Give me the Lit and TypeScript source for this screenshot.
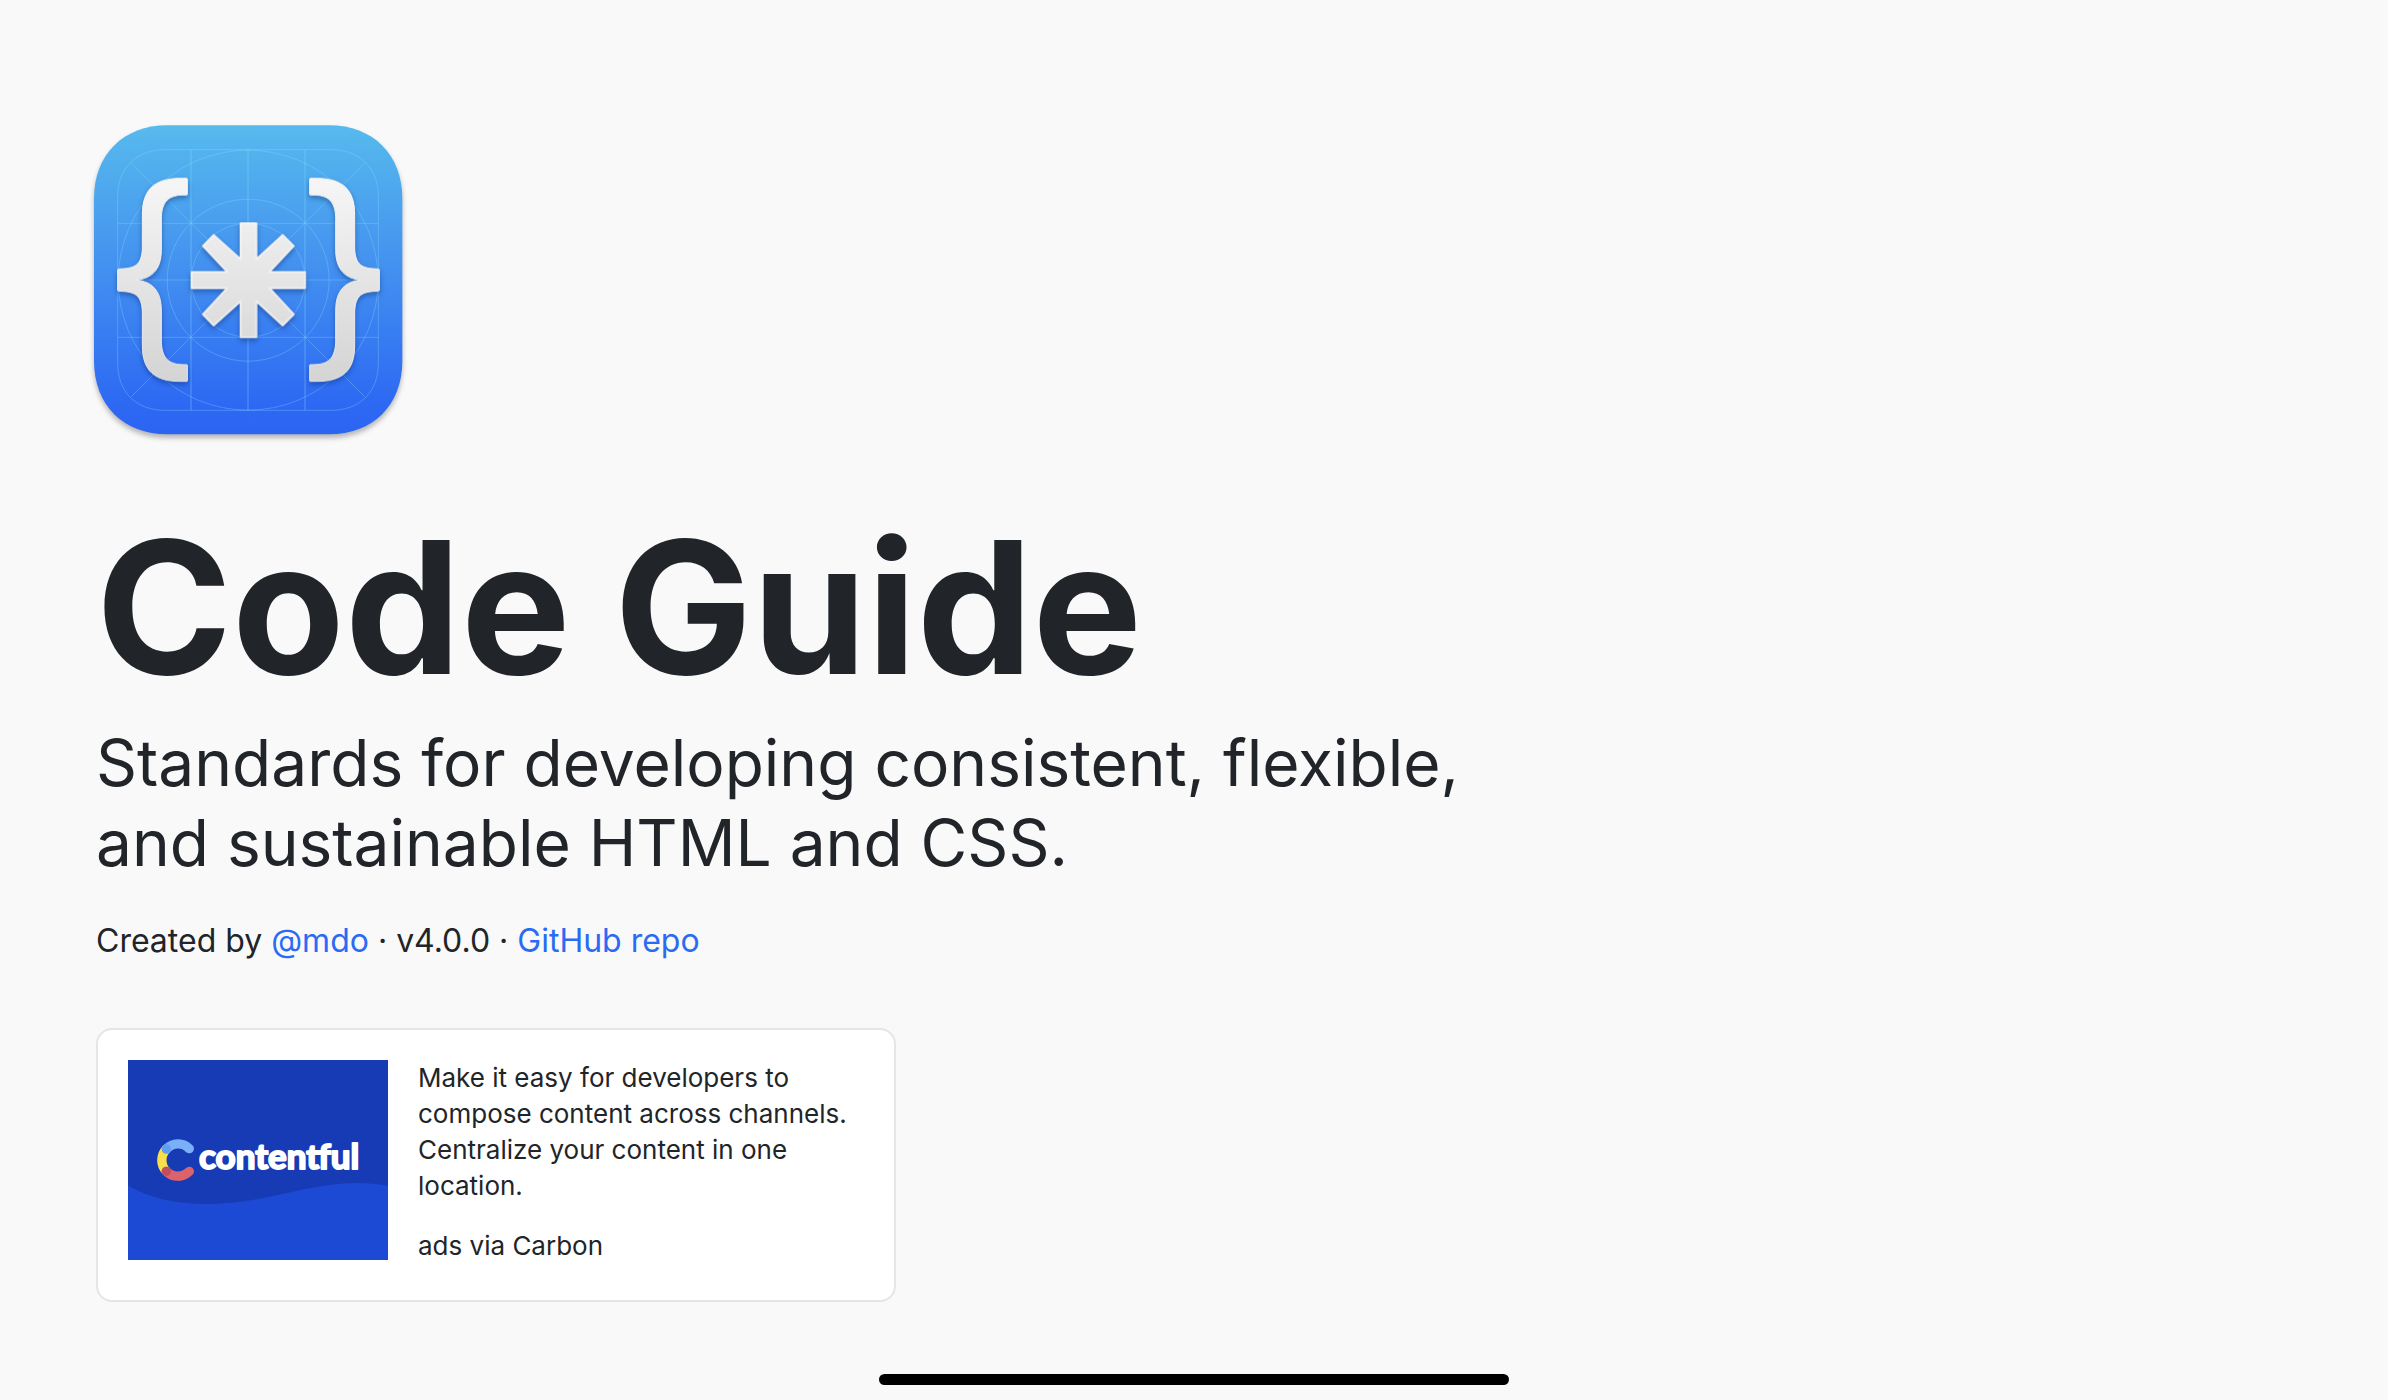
import { LitElement, html, css } from "lit";
import { customElement } from "lit/decorators.js";

@customElement("guide-logo")
class GuideLogo extends LitElement {
  static styles = css`
    :host {
      display: block;
    }
    .logo {
      display: block;
      width: 304px;
      height: 310px;
      overflow: visible;
    }
    .tile {
      filter: drop-shadow(0 11px 8px rgba(0, 0, 0, 0.28));
    }
    .glyph {
      filter: drop-shadow(0 8px 8px rgba(10, 40, 110, 0.45));
    }
  `;

  render() {
    return html`
      <svg class="logo" viewBox="48 45 912 930" role="img" aria-label="Code Guide logo">
        <defs>
          <linearGradient id="sky" gradientUnits="userSpaceOnUse" x1="0" y1="46" x2="0" y2="973">
            <stop offset="0" stop-color="#57baed" />
            <stop offset="0.5" stop-color="#418df0" />
            <stop offset="0.9" stop-color="#2d69f3" />
            <stop offset="1" stop-color="#2c64f1" />
          </linearGradient>
          <linearGradient id="metal" gradientUnits="userSpaceOnUse" x1="0" y1="204" x2="0" y2="815">
            <stop offset="0" stop-color="#f6f6f6" />
            <stop offset="1" stop-color="#d4d4d4" />
          </linearGradient>
          <linearGradient id="rim" gradientUnits="userSpaceOnUse" x1="0" y1="204" x2="0" y2="815">
            <stop offset="0" stop-color="#f8f8f8" />
            <stop offset="1" stop-color="#e8e8e8" />
          </linearGradient>
          <path
            id="brace"
            d="M320 205 H302 C226 205 187 236 187 314 V410 C187 458 170 474 130 476 L116 477 Q113 477 113 480 V540 Q113 543 116 543 L130 544 C170 546 187 562 187 610 V706 C187 784 226 814 302 814 H320 Q322 814 322 812 V766 Q322 764 320 764 H312 C266 764 244 745 244 690 V600 C244 540 214 515 170 510 C214 505 244 480 244 420 V328 C244 274 266 255 312 255 H320 Q322 255 322 253 V207 Q322 205 320 205 Z"
          />
        </defs>
        <path
          class="tile"
          fill="url(#sky)"
          d="M262 46 H747 C879 46 967 134 967 266 V753 C967 885 879 973 747 973 H262 C130 973 42 885 42 753 V266 C42 134 130 46 262 46 Z"
        />
        <g fill="none" stroke="#8fe0ff" stroke-opacity="0.3" stroke-width="3">
          <path d="M255 119 H753 C840 119 895 174 895 261 V759 C895 846 840 901 753 901 H255 C168 901 113 846 113 759 V261 C113 174 168 119 255 119 Z" />
          <path stroke-width="4" d="M333 119 V901 M504 119 V901 M675 119 V901" />
          <path d="M113 340 H895 M113 510 H895 M113 682 H895" />
          <path d="M155 160 L853 859 M853 160 L155 859" />
          <circle cx="504.5" cy="510.5" r="390" />
          <circle cx="504.5" cy="510.5" r="243" />
          <circle cx="504.5" cy="510.5" r="171" />
        </g>
        <g class="glyph" fill="url(#metal)" stroke="url(#rim)" stroke-width="3" stroke-linejoin="round">
          <use href="#brace" />
          <use href="#brace" transform="matrix(-1 0 0 1 1011 0)" />
          <path
            stroke-width="6"
            d="M482 340 H529 V448 L608 375 L641 408 L568 486 H675 V534 H568 L641 613 L608 646 L529 573 V681 H482 V573 L401 646 L369 613 L442 534 H335 V486 H442 L369 408 L401 375 L482 448 Z"
          />
        </g>
      </svg>
    `;
  }
}

@customElement("sponsor-card")
class SponsorCard extends LitElement {
  static styles = css`
    :host {
      display: block;
    }
    .card {
      display: flex;
      gap: 30px;
      box-sizing: border-box;
      max-width: 800px;
      padding: 30px 30px 36px;
      border: 2px solid #e5e5e5;
      border-radius: 16px;
      background: #fff;
      font-size: 26px;
      line-height: 36px;
    }
    .banner {
      display: block;
      flex: none;
      width: 260px;
      height: 200px;
    }
    .word {
      font-family: Lato, sans-serif;
      font-weight: 700;
      font-size: 105px;
      fill: #fff;
      stroke: #fff;
      stroke-width: 6px;
      stroke-linejoin: round;
    }
    .copy {
      display: flex;
      flex-direction: column;
      gap: 24px;
    }
    .copy a {
      color: inherit;
      text-decoration: none;
    }
  `;

  render() {
    return html`
      <aside class="card">
        <svg class="banner" viewBox="144 150 780 600">
          <rect x="144" y="150" width="780" height="600" fill="#173ab5" />
          <path
            fill="#1d4ad4"
            d="M144 526 C215 570 300 582 385 582 C550 582 680 519 830 519 C865 519 895 522 924 527 V750 H144 Z"
          />
          <g fill="none" stroke-width="28" stroke-linecap="round">
            <path stroke="#f8de4a" d="M259 417 C241 436 241 465 259 484" />
            <path stroke="#7bb0f8" d="M259 417 C278 397 309 396 328 416" />
            <path stroke="#dc626c" d="M259 484 C278 503 309 504 328 484" />
          </g>
          <circle cx="259" cy="417" r="14" fill="#5f9ef5" />
          <circle cx="259" cy="484" r="14" fill="#c34c5d" />
          <text class="word" x="357" y="478">contentful</text>
        </svg>
        <div class="copy">
          <a href="#contentful">
            Make it easy for developers to compose content across channels. Centralize your content in
            one location.
          </a>
          <a href="#carbon">ads via Carbon</a>
        </div>
      </aside>
    `;
  }
}

@customElement("app-root")
class AppRoot extends LitElement {
  static styles = css`
    :host {
      display: block;
      box-sizing: border-box;
      min-height: 100vh;
      padding: 125px 96px 96px;
      background: #f9f9f9;
      color: #212529;
      font-family: Inter, "Liberation Sans", sans-serif;
    }
    .title {
      margin: 76px 0 0;
      font-size: 184px;
      line-height: 192px;
      font-weight: 700;
    }
    .lead {
      max-width: 1400px;
      margin: 20px 0 0;
      font-size: 64px;
      line-height: 80px;
    }
    .meta {
      margin: 34px 0 0;
      font-size: 32px;
      line-height: 48px;
    }
    .meta a {
      color: #2b6bf3;
      text-decoration: none;
    }
    .sponsor {
      margin-top: 63px;
    }
    .home {
      position: fixed;
      bottom: 15px;
      left: 50%;
      width: 630px;
      height: 11px;
      margin-left: -315px;
      border-radius: 6px;
      background: #000;
    }
  `;

  render() {
    return html`
      <header>
        <guide-logo></guide-logo>
        <h1 class="title">Code Guide</h1>
        <p class="lead">
          Standards for developing consistent, flexible, and sustainable HTML and CSS.
        </p>
        <p class="meta">
          Created by <a href="#mdo">@mdo</a> · v4.0.0 · <a href="#repo">GitHub repo</a>
        </p>
        <sponsor-card class="sponsor"></sponsor-card>
      </header>
      <div class="home"></div>
    `;
  }
}
